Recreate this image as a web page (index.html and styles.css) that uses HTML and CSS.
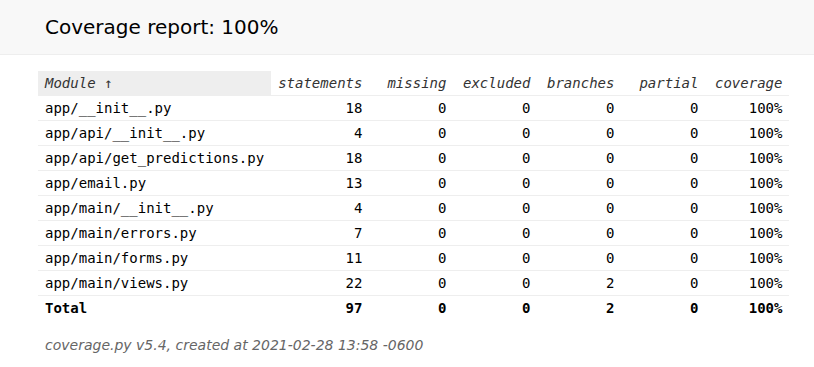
FILE: index.html
```html
<!DOCTYPE html>
<html>
<head>
<meta charset="utf-8">
<title>Coverage report</title>
<link rel="stylesheet" href="styles.css">
</head>
<body>
<div class="header">
  <h1 class="title">Coverage report: <span>100%</span></h1>
</div>
<div class="index">
  <table class="report">
    <thead>
      <tr>
        <th class="name sorted">Module ↑</th>
        <th>statements</th>
        <th>missing</th>
        <th>excluded</th>
        <th>branches</th>
        <th>partial</th>
        <th>coverage</th>
      </tr>
    </thead>
    <tbody>
      <tr><td class="name">app/__init__.py</td><td>18</td><td>0</td><td>0</td><td>0</td><td>0</td><td>100%</td></tr>
      <tr><td class="name">app/api/__init__.py</td><td>4</td><td>0</td><td>0</td><td>0</td><td>0</td><td>100%</td></tr>
      <tr><td class="name">app/api/get_predictions.py</td><td>18</td><td>0</td><td>0</td><td>0</td><td>0</td><td>100%</td></tr>
      <tr><td class="name">app/email.py</td><td>13</td><td>0</td><td>0</td><td>0</td><td>0</td><td>100%</td></tr>
      <tr><td class="name">app/main/__init__.py</td><td>4</td><td>0</td><td>0</td><td>0</td><td>0</td><td>100%</td></tr>
      <tr><td class="name">app/main/errors.py</td><td>7</td><td>0</td><td>0</td><td>0</td><td>0</td><td>100%</td></tr>
      <tr><td class="name">app/main/forms.py</td><td>11</td><td>0</td><td>0</td><td>0</td><td>0</td><td>100%</td></tr>
      <tr><td class="name">app/main/views.py</td><td>22</td><td>0</td><td>0</td><td>2</td><td>0</td><td>100%</td></tr>
      <tr class="total"><td class="name">Total</td><td>97</td><td>0</td><td>0</td><td>2</td><td>0</td><td>100%</td></tr>
    </tbody>
  </table>
</div>
<div class="footer">
  <p class="credit">coverage.py v5.4, created at 2021-02-28 13:58 -0600</p>
</div>
</body>
</html>
```
FILE: styles.css
```css
html, body {
  margin: 0;
  padding: 0;
  background: #fff;
  color: #000;
  font-family: "DejaVu Sans", sans-serif;
}
.header {
  background: #f8f8f8;
  border-bottom: 1px solid #eee;
  padding: 16px 45px;
}
.title {
  margin: 0;
  font-size: 20px;
  font-weight: normal;
  line-height: 22px;
}
.index {
  padding: 16px 0 0 38px;
}
.report {
  border-collapse: collapse;
  font-family: "DejaVu Sans Mono", monospace;
  font-size: 14px;
}
.report th, .report td {
  text-align: right;
  width: 70px;
  padding: 3.5px 7px;
  border-bottom: 1px solid #eee;
  line-height: 17px;
  white-space: nowrap;
}
.report th {
  font-style: italic;
  font-weight: normal;
  color: #333;
}
.report .name {
  text-align: left;
  width: auto;
}
.report th.sorted {
  background: #eee;
}
.report tr.total td {
  font-weight: bold;
  border-bottom: none;
}
.footer {
  padding: 0 45px;
}
.credit {
  margin: 17px 0 0;
  font-size: 14px;
  font-style: italic;
  color: #666;
  line-height: 17px;
}
```
